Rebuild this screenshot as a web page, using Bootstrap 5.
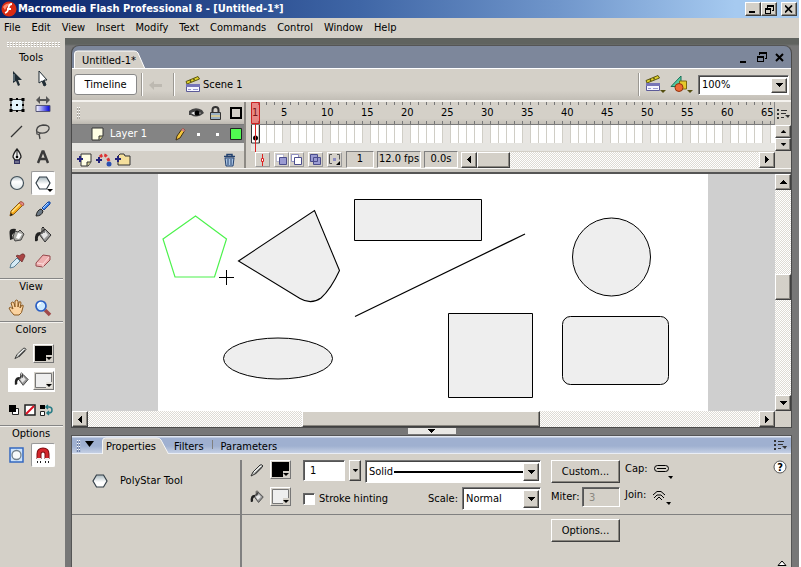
<!DOCTYPE html>
<html lang="en">
<head>
<meta charset="utf-8">
<meta name="viewport" content="width=device-width, initial-scale=1">
<title>Macromedia Flash Professional 8 - [Untitled-1*]</title>
<link href="https://cdn.jsdelivr.net/npm/bootstrap@5.3.0/dist/css/bootstrap.min.css" rel="stylesheet">
<style>
:root{--face:#d4d0c8;--lo:#808080;--dk:#404040;--frame:#777}
body{font:11px/14px "DejaVu Sans Condensed","Noto Sans",sans-serif;color:#000;background:#fff;overflow:hidden}
svg{display:block;flex:none}
button{font:inherit;color:inherit;padding:0;border:0;background:none}
a{color:inherit;text-decoration:none}
.app{min-height:100vh;margin-right:2px;background:var(--face)}
.titlebar{height:18px;background:linear-gradient(90deg,#0a246a,#1c3b80 18%,#3f66a6 45%,#7096cb 70%,#a6caf0 92%);color:#fff;font-size:11px;font-weight:700;padding:0 2px 0 1px}
.menubar{height:20px;padding:0 4px;gap:11px}
.raised{background:var(--face);border:1px solid;border-color:#fff var(--dk) var(--dk) #fff;box-shadow:inset -1px -1px 0 #8a8780;display:flex;align-items:center;justify-content:center;flex:none}
.sunk{border:1px solid;border-color:var(--lo) #fff #fff var(--lo)}
.winbtn{width:16px;height:14px}
.tools{width:65px}
.grip-h{height:5px;margin:4px 5px 0 6px;background:conic-gradient(#fff 25%,#a9a69f 0 50%,var(--face) 0) 0 0/3px 2px}
.grip-v{width:5px;height:12px;background:conic-gradient(#fff 25%,#a9a69f 0 50%,var(--face) 0) 0 0/2px 3px}
.tool-title{height:15px;padding-right:3px;text-align:center}
.tool-grid{display:grid;grid-template-columns:26px 26px;padding-left:4px}
.tool{height:26px;display:flex;align-items:center;justify-content:center}
.tool.on{background:#fff;border:1px solid;border-color:#999 #fff #fff #999;border-radius:2px;height:24px;width:24px;margin:1px}
.tool-sep{height:2px;background:linear-gradient(#858585 50%,#f4f2ee 50%);margin-right:2px}
.swatch-row{height:24px;margin:3px 10px 3px 8px;padding-left:4px;gap:4px}
.swatch{width:21px;height:19px;border:1px solid;border-color:#fff #777 #777 #fff;padding:1px;background:var(--face);display:flex}
.color-acts{height:30px;gap:4px;padding-right:4px}
.work{min-width:0;background:linear-gradient(#60635f 0 6px,var(--frame) 8px);padding:7px 7px 0 6px}
.doc{border:1px solid #4a4a4a;border-top-color:#555;border-radius:8px 8px 0 0;background:#7d879b;overflow:hidden}
.doc-head{height:22px;padding:0 6px 0 2px}
.tabbox{display:grid}
.tabbox>*{grid-area:1/1}
.editbar{height:32px;background:linear-gradient(var(--face) 70%,#c2beb6);border-top:1px solid #fff;padding:0 2px}
.timeline-btn{width:63px;height:21px;background:#fff;border:1px solid #888;border-radius:3px}
.vsep{width:2px;height:23px;background:linear-gradient(90deg,#9b9892 50%,#fff 50%)}
.combo{background:#fff;border:1px solid;border-color:#777 #fff #fff #777;box-shadow:inset 1px 1px 0 #444;display:flex;padding:2px 1px 1px 2px}
.combo select{appearance:none;border:0;background:none;font:inherit;color:#000;flex:1;min-width:0;padding:0 1px}
.combo .raised{width:16px}
.tl{background:var(--face);border-top:2px solid #f4f2ee}
.tl-left{width:174px;flex:none;border-right:2px solid #8d8a84}
.tl-head{height:23px;background:linear-gradient(var(--face) 75%,#bdb9b1);border-bottom:1px solid #7b7b7b}
.layer{height:18px;background:#848484;color:#fff}
.col-end{margin-right:2px}
.pad-strip{height:8px;background:#e6e5e1}
.tl-foot{height:17px}
.tl-mid{border-left:5px solid var(--face);min-width:0;position:relative}
.ruler{--t:repeating-linear-gradient(90deg,transparent 0 7px,#777 7px 8px);background:var(--t) 0 0/100% 3px no-repeat,var(--t) 0 100%/100% 3px no-repeat,linear-gradient(var(--face) 75%,#c4c0b8);overflow:hidden;white-space:nowrap;border-right:1px solid #888}
.ruler span{width:40px;flex:none}
.ruler .first{width:30px;padding-left:1px}
.frames{height:18px;background:repeating-linear-gradient(90deg,transparent 0 7px,#d0cec6 7px 8px),repeating-linear-gradient(90deg,#fff 0 32px,#e8e6e2 32px 40px)}
.playhead{position:absolute;left:0;top:0}
.minib{width:15px;height:15px;border:1px solid;border-color:#fff #999 #999 #fff;display:flex;align-items:center;justify-content:center;flex:none}
.readouts{gap:3px;margin-right:3px}
.readout{height:17px;text-align:center;flex:none;white-space:nowrap}
.track{background:repeating-conic-gradient(#fff 0 25%,#dedbd4 0 50%) 0 0/2px 2px}
.sb{width:16px;height:16px}
.tl-end{width:16px;flex:none}
.tl-base{height:6px;background:linear-gradient(#f8f7f4 0 1px,#c6c3bc 1px 4px,#555 4px)}
.stage-row{height:237px}
.pasteboard{background:#cfcfcf;padding-left:86px;min-width:0;overflow:hidden}
.stage{background:#fff;width:550px;flex:none}
.vscroll{width:16px;flex:none}
.gap-bar{height:7px}
.gap-bar button{width:48px;height:6px;background:#e9e8e5;margin:0 auto}
.props{background:var(--face);border:1px solid #555;border-bottom:0}
.props-head{height:18px;background:linear-gradient(#e0e6f0 0 1px,#9fb0d0 2px 10px,#c5d0e4);border-bottom:1px solid #e9edf5}
.props-head .grip-v{background:conic-gradient(#fff 25%,#6f80a6 0 50%,#a9b8d4 0) 0 0/2px 3px}
.props-left{width:168px;flex:none}
.tool-badge{margin:0 12px 0 20px}
.props-row{border-bottom:1px solid #808080;padding-top:2px}
.vrule{width:2px;background:#808080;flex:none}
.p-btn{height:23px}
.txt{font:inherit;color:#000;border:1px solid;border-color:#666 #fff #fff #666;box-shadow:inset 1px 1px 0 #555;background:#fff;padding:0 0 0 6px;border-radius:0}
.txt:disabled{background:var(--face);color:#8a8780}
.chk{appearance:none;width:12px;height:12px;margin:0;background:#fff;border:1px solid;border-color:#666 #fff #fff #666;box-shadow:inset 1px 1px 0 #555}
.paint-col{padding-right:8px}
.paint-col>div{gap:6px}
.strokes{width:252px;padding:0 10px 0 4px}
.mid-col{width:69px}
.cap-col{padding:6px 0 0 5px}
.cap-col>div{height:26px;gap:6px}
</style>
<script src="https://cdn.jsdelivr.net/npm/bootstrap@5.3.0/dist/js/bootstrap.bundle.min.js"></script>
</head>
<body>
<svg width="0" height="0" class="position-absolute" aria-hidden="true">
<defs>
<linearGradient id="gBlue"><stop offset="0" stop-color="#fff"/><stop offset="1" stop-color="#0000d8"/></linearGradient>
<linearGradient id="gBall" x2="0" y2="1"><stop offset="0" stop-color="#b5c3c9"/><stop offset=".4" stop-color="#fff"/><stop offset="1" stop-color="#dfe8ea"/></linearGradient>
<linearGradient id="gHex" x2="0" y2="1"><stop offset="0" stop-color="#a9b8be"/><stop offset=".6" stop-color="#fff"/></linearGradient>
<symbol id="up" viewBox="0 0 7 4"><path d="M3 0h1v1h1v1h1v1h1v1H0V3h1V2h1V1h1z"/></symbol>
<symbol id="down" viewBox="0 0 7 4"><path d="M0 0h7v1H6v1H5v1H4v1H3V3H2V2H1V1H0z"/></symbol>
<symbol id="left" viewBox="0 0 4 7"><path d="M4 0v7H3V6H2V5H1V4H0V3h1V2h1V1h1V0z"/></symbol>
<symbol id="right" viewBox="0 0 4 7"><path d="M0 0h1v1h1v1h1v1h1v1H3v1H2v1H1v1H0z"/></symbol>
<symbol id="pan" viewBox="0 0 13 10"><path d="M0 0h2v2H0zM0 4h2v2H0zM0 8h2v2H0zM4 1h6v1H4zM4 4h5v1H4zM4 8h3v1H4z" fill="#333"/><path d="M8 6h5l-2 3z" fill="#333"/></symbol>
<symbol id="clap" viewBox="0 0 17 17"><path d="M1 5.500 13 .500l1.500 2.500L2 8z" fill="#e0d22c" stroke="#5d5610"/><path d="M5 4l1 2M8.500 2.500l1 2" stroke="#5d5610" stroke-width="1.500"/><path d="M1.500 8.500h13v7h-13z" fill="#f6f6ff" stroke="#5b5a98"/><path d="M1 8h14v3H1z" fill="#7775b8"/><path d="M3 13.500h3M8 13.500h5" stroke="#9a99d0"/></symbol>
<symbol id="pencil" viewBox="0 0 18 18"><path d="M2 16l1-5L12 2q2-1 4 2L6 14z" fill="#f5a91c" stroke="#8a5a10"/><path d="M4 12l8-8" stroke="#ffe486" stroke-width="1.500"/><path d="M11 3l1-1q3-1 4 2l-1 2z" fill="#e38a86" stroke="#9d4742" stroke-width=".7"/><path d="M2 16l1-3 2 2z" fill="#222"/></symbol>
<symbol id="bucket" viewBox="0 0 18 18"><path d="M5 8l6-5 6 6-6 7z" fill="#999" stroke="#333"/><path d="M7 8l4-3 3 4-4 4z" fill="#e6e6e6"/><path d="M8 8V2q1-2 2 0v5" fill="none" stroke="#222"/><path d="M6 6q-6 0-5 9 2 1 3-1-1-4 3-6z" fill="#222"/></symbol>
<symbol id="hexa" viewBox="0 0 16 14"><path d="M4.500 1h7L15 7l-3.500 6h-7L1 7z" fill="url(#gHex)" stroke="#333f48" stroke-width="1.200"/></symbol>
<symbol id="pen2" viewBox="0 0 14 14"><path d="M1 13l2-4 7-7q2-1 3 1L5 11z" fill="#c9cdc9" stroke="#333"/><path d="M4 9l7-6" stroke="#fff"/><path d="M5 11l7-7" stroke="#444" stroke-width="1.500"/></symbol>
</defs></svg>

<div class="app d-flex flex-column">
<header class="titlebar d-flex align-items-center">
 <svg width="17" height="16" viewBox="0 0 17 16"><circle cx="8" cy="8" r="7.500" fill="#d92b12"/><path d="M2 6q3-5 9-3-5 1-7 6z" fill="#ff8e72"/><path d="M11 3q-3 0-3.500 4T4 12M6 8h4" fill="none" stroke="#fff" stroke-width="1.800"/></svg>
 <span class="flex-grow-1">Macromedia Flash Professional 8 - [Untitled-1*]</span>
 <button class="raised winbtn" aria-label="Minimize"><svg width="8" height="8"><path d="M0 6h6v2H0z"/></svg></button>
 <button class="raised winbtn" aria-label="Restore"><svg width="9" height="9"><path d="M2 0h7v6H7V5h1V2H3v1H2zM0 3h6v6H0zM1 5v3h4V5z" fill-rule="evenodd"/></svg></button>
 <button class="raised winbtn ms-1" aria-label="Close"><svg width="8" height="8"><path d="M0 .500l7 7M7 .500l-7 7" stroke="#000" stroke-width="1.700"/></svg></button>
</header>
<nav class="menubar d-flex align-items-center">
 <a href="#">File</a><a href="#">Edit</a><a href="#">View</a><a href="#">Insert</a><a href="#">Modify</a><a href="#">Text</a><a href="#">Commands</a><a href="#">Control</a><a href="#">Window</a><a href="#">Help</a>
</nav>

<div class="d-flex flex-grow-1">
<aside class="tools flex-shrink-0">
 <div class="grip-h"></div>
 <div class="tool-title mt-1">Tools</div>
 <div class="tool-grid">
  <button class="tool" aria-label="Selection"><svg width="18" height="18"><path d="M5 1v12l3-2 2 5 2-1-2-5h4z" fill="#1e2b33"/><path d="M6 4v7" stroke="#8ba0ab"/></svg></button>
  <button class="tool" aria-label="Subselection"><svg width="18" height="18"><path d="M5 1v12l3-2 2 5 2-1-2-5h3z" fill="#fff" stroke="#1e2b33"/><path d="M8 11l2 5 2-1-2-5z" fill="#1e2b33"/></svg></button>
  <button class="tool" aria-label="Free transform"><svg width="18" height="18"><path d="M3 3.500h12v11H3z" fill="#e2f3fa" stroke="#333"/><path d="M1.500 2h3v3h-3zM13.500 2h3v3h-3zM1.500 13h3v3h-3zM13.500 13h3v3h-3zM8 2h2v2H8zM8 14h2v2H8zM2 8h2v2H2zM14 8h2v2h-2zM8 8h2v2H8z"/></svg></button>
  <button class="tool" aria-label="Gradient transform"><svg width="18" height="18"><path d="M4 4h10" stroke="#555" stroke-width="2"/><path d="M6 0v8L2 4zM12 0v8l4-4z" fill="#555"/><path d="M2 9.500h14v6H2z" fill="url(#gBlue)" stroke="#557"/></svg></button>
  <button class="tool" aria-label="Line"><svg width="18" height="18"><path d="M3 15L14 4" stroke="#333" stroke-width="1.200"/></svg></button>
  <button class="tool" aria-label="Lasso"><svg width="18" height="18"><path d="M3 11Q1 4 9 3q7 0 6 4-2 5-9 4-4-2-3 1 3 1 3-1M5 12l1 5" fill="none" stroke="#444" stroke-width="1.300"/></svg></button>
  <button class="tool" aria-label="Pen"><svg width="18" height="18"><path d="M9 1Q5 6 5 9l2 3h4l2-3q0-3-4-8z" fill="#eee" stroke="#222" stroke-width="1.300"/><path d="M9 2v7" stroke="#222"/><circle cx="9" cy="9" r="1.300"/><path d="M6 12h6v4H6z" fill="#343460"/><path d="M7 14h4" stroke="#aab"/></svg></button>
  <button class="tool" aria-label="Text"><svg width="18" height="18"><path d="M4 15L8.500 3.500h1L14 15M6 11h6" fill="none" stroke="#3a3a3a" stroke-width="2.400"/></svg></button>
  <button class="tool" aria-label="Oval"><svg width="18" height="18"><circle cx="9" cy="9" r="6.500" fill="url(#gBall)" stroke="#43515a" stroke-width="1.200"/></svg></button>
  <button class="tool on" aria-label="PolyStar"><svg width="20" height="20"><use href="#hexa" x="2" y="3" width="16" height="14"/><path d="M14 16h6l-3 3z"/></svg></button>
  <button class="tool" aria-label="Pencil"><svg width="18" height="18"><use href="#pencil"/></svg></button>
  <button class="tool" aria-label="Brush"><svg width="18" height="18"><path d="M8 8l6-6q3-1 2 2l-6 6z" fill="#3f86ec" stroke="#14429a"/><path d="M9 8l5-5" stroke="#b8dcff"/><path d="M2 16q1-6 5-7l2 2q-1 5-7 5z" fill="#6b7884" stroke="#222"/></svg></button>
  <button class="tool" aria-label="Ink bottle"><svg width="18" height="18"><path d="M7 5l3 1 2-2 4 4-3 6-6 1-2-4z" fill="#a9a9a4" stroke="#444"/><path d="M10 7l4 1-3 5-3-1z" fill="#fff"/><path d="M8 3q-7-1-6.500 4l.5 7 3-1-1-4 3-3z" fill="#222"/></svg></button>
  <button class="tool" aria-label="Paint bucket"><svg width="18" height="18"><use href="#bucket"/></svg></button>
  <button class="tool" aria-label="Eyedropper"><svg width="18" height="18"><path d="M2 16l1-4 6-6 3 3-6 6z" fill="#d5eaf5" stroke="#5a7f95"/><path d="M8 4l6 6 1-2 2-4q-1-3-3-2l-3 2-1-1z" fill="#a94444" stroke="#662525" stroke-width=".7"/></svg></button>
  <button class="tool" aria-label="Eraser"><svg width="18" height="18"><path d="M2 11L9 3l7 1v4l-7 7-7-1z" fill="#eeb0b0" stroke="#96484c"/><path d="M3 11l6 1 6-7M9 12v3" fill="none" stroke="#fbdcdc"/></svg></button>
 </div>
 <div class="tool-sep mt-1"></div>
 <div class="tool-title">View</div>
 <div class="tool-grid">
  <button class="tool" aria-label="Hand"><svg width="18" height="18"><path d="M6 16Q2 12 1 9q1-2 4 1L3 4q2-2 3 0l1 4V2q2-2 3 0v6l1-5q2-1 2 1l-1 5 2-3q2 0 1 2-1 7-4 8z" fill="#fbd3a0" stroke="#8a5a22"/></svg></button>
  <button class="tool" aria-label="Zoom"><svg width="18" height="18"><path d="M11 11l5 5" stroke="#a04a4a" stroke-width="3.500"/><circle cx="7" cy="7" r="5" fill="#cdeaff" stroke="#2a5fc4" stroke-width="1.700"/><path d="M4 7q0-3 3-3" stroke="#fff" fill="none" stroke-width="1.500"/></svg></button>
 </div>
 <div class="tool-sep"></div>
 <div class="tool-title">Colors</div>
 <div class="swatch-row d-flex align-items-center"><svg width="17" height="16"><use href="#pen2" x="2" y="1" width="13" height="14"/></svg>
  <button class="swatch" aria-label="Stroke color"><svg width="17" height="15"><path d="M0 0h17v15H0z" fill="#000"/><path d="M11 9h6v6h-6z" fill="#d4d0c8"/><path d="M11 11h6l-3 3z"/></svg></button></div>
 <div class="swatch-row d-flex align-items-center bg-white"><svg width="17" height="16"><use href="#bucket" x="2" y="0" width="15" height="15"/></svg>
  <button class="swatch" aria-label="Fill color"><svg width="17" height="15"><path d="M.500 .500h16v14H.500z" fill="#eee" stroke="#777"/><path d="M11 9h6v6h-6z" fill="#e4e2dc"/><path d="M11 11h6l-3 3z"/></svg></button></div>
 <div class="color-acts d-flex align-items-center justify-content-center">
  <button aria-label="Black and white"><svg width="12" height="12"><path d="M4.500 4.500h6v6h-6z" fill="#fff" stroke="#222"/><path d="M1 1h7v7H1z"/></svg></button>
  <button aria-label="No color"><svg width="12" height="12"><path d="M1 1h10v10H1z" fill="#fff" stroke="#222" stroke-width="1.500"/><path d="M2 10l8-8" stroke="#d12" stroke-width="2"/></svg></button>
  <button aria-label="Swap colors"><svg width="13" height="12"><path d="M0 1h5v4H0z"/><path d="M.500 7.500h4v4h-4z" fill="#fff" stroke="#222"/><path d="M6 3h3q3 0 3 3t-3 3H7M8 1L6 3l2 2M9 7L7 9l2 2" fill="none" stroke="#287c86" stroke-width="1.500"/></svg></button>
 </div>
 <div class="tool-sep"></div>
 <div class="tool-title">Options</div>
 <div class="tool-grid">
  <button class="tool" aria-label="Object drawing"><svg width="16" height="16"><path d="M1 1h13v14H1z" fill="#cfe4fb" stroke="#3568c0" stroke-width="1.500"/><circle cx="7.500" cy="8" r="4.500" fill="#f6fafa" stroke="#71808a" stroke-width="1.300"/></svg></button>
  <button class="tool on" aria-label="Snap to objects"><svg width="18" height="18"><path d="M5 13V8q0-4 4-4t4 4v5" fill="none" stroke="#7a0f12" stroke-width="5"/><path d="M5 12V8q0-4 4-4t4 4v4" fill="none" stroke="#d3252b" stroke-width="3"/><path d="M3 12h4v2H3zM11 12h4v2h-4z" fill="#eee"/><path d="M3.500 15v2M6.500 15v2M11.500 15v2M14.500 15v2" stroke="#222"/></svg></button>
 </div>
</aside>

<main class="work d-flex flex-column flex-grow-1">
<section class="doc">
 <div class="doc-head d-flex align-items-end justify-content-between">
  <div class="tabbox"><svg width="72" height="18"><path d="M.500 19V4q0-3 3-3H60q3 0 4 2l7 16z" fill="#d4d0c8" stroke="#fff"/></svg><span class="px-2 pt-1">Untitled-1*</span></div>
  <div class="d-flex align-items-center gap-2 pb-1">
   <button aria-label="Minimize document"><svg width="12" height="12"><path d="M4 9h6v2H4z"/></svg></button>
   <button aria-label="Restore document"><svg width="11" height="12"><path d="M3 0h8v7H9V6h1V2H4v1H3zM1 4h7v6H1zM2 6v3h5V6z" fill-rule="evenodd"/></svg></button>
   <button aria-label="Close document"><svg width="10" height="12"><path d="M1 2l7 7M8 2l-7 7" stroke="#000" stroke-width="2"/></svg></button>
  </div>
 </div>
 <div class="editbar d-flex align-items-center">
  <button class="timeline-btn">Timeline</button>
  <div class="vsep ms-1"></div>
  <svg width="26" height="16"><path d="M6 8l5-4v3h8v3h-8v3z" fill="#bdb9b1"/></svg>
  <div class="vsep ms-1"></div>
  <svg class="ms-2" width="20" height="18"><use href="#clap" x="2" y="0" width="17" height="17"/></svg>
  <a href="#" class="flex-grow-1">Scene 1</a>
  <div class="vsep"></div>
  <button class="ms-1" aria-label="Edit scene"><svg width="22" height="19"><use href="#clap" x="1" y="0" width="17" height="17"/><path d="M16 15h6l-3 3z" fill="#554f10"/></svg></button>
  <button class="ms-1 me-1" aria-label="Edit symbols"><svg width="24" height="19"><path d="M1 11.500L11 1v10.500z" fill="#52c9a0" stroke="#187058"/><path d="M9.500 6h7v8h-7z" fill="#e6c92c" stroke="#7c6a12"/><circle cx="9" cy="12.500" r="4" fill="#ee6a35" stroke="#93330f"/><path d="M17 15h6l-3 3z" fill="#554f10"/></svg></button>
  <div class="combo" style="width:91px;height:20px"><select aria-label="Zoom"><option>100%</option></select><span class="raised"><svg width="7" height="4"><use href="#down"/></svg></span></div>
 </div>

 <div class="tl d-flex">
  <div class="tl-left">
   <div class="tl-head d-flex align-items-center ps-1">
    <div class="grip-v me-auto"></div>
    <svg width="17" height="14"><path d="M1 5q6-5 13-1l2 3q-7 6-13 2l-2 0z" fill="#444"/><path d="M3 7q5-3 10 0-5 4-10 0z" fill="#eee"/><circle cx="9" cy="7" r="2.500"/></svg>
    <svg class="ms-1" width="13" height="14"><path d="M3.500 7V4q0-3 3-3t3 3v3" fill="none" stroke="#333" stroke-width="2"/><path d="M1.500 6.500h10v7h-10z" fill="#dfe9e4" stroke="#333"/><path d="M2 8h9M2 12h9" stroke="#557ba5"/><path d="M2 10h9" stroke="#c9a94a"/></svg>
    <svg class="ms-2 col-end" width="12" height="12"><path d="M1 1h10v10H1z" fill="none" stroke="#000" stroke-width="2"/></svg>
   </div>
   <div class="layer d-flex align-items-center">
    <svg class="ms-3 me-1" width="18" height="14"><path d="M4 1h11v8l-3 4H4z" fill="#fffee4" stroke="#333"/><path d="M11 13V9h4" fill="#ccc98c" stroke="#333"/></svg>
    <span class="flex-grow-1">Layer 1</span>
    <svg width="12" height="14"><path d="M2 13l1-4 5-7q2-1 3 1L6 11z" fill="#f4c63c" stroke="#443010"/><path d="M7 3l2-2 2 2-1 2z" fill="#cf8080"/></svg>
    <svg class="ms-2" width="36" height="14"><path d="M3 6h3v3H3zM22 6h3v3h-3z" fill="#fff"/></svg>
    <svg class="col-end" width="12" height="12"><path d="M.500 .500h11v11H.500z" fill="#51fa51" stroke="#222"/></svg>
   </div>
   <div class="pad-strip"></div>
   <div class="tl-foot d-flex align-items-center ps-1">
    <button aria-label="Insert layer"><svg width="19" height="15"><path d="M5 2h10v8l-3 4H5z" fill="#fffee4" stroke="#333"/><path d="M11 14v-4h4" fill="#ccc98c" stroke="#333"/><path d="M1 7h6M4 4v6" stroke="#24247a" stroke-width="2"/></svg></button>
    <button aria-label="Add motion guide"><svg width="19" height="15"><path d="M5 5q5-6 9 4" fill="none" stroke="#d33" stroke-width="3" stroke-dasharray="3 2"/><path d="M1 8h6M4 5v6" stroke="#24247a" stroke-width="2"/><circle cx="14" cy="12" r="2.500" fill="#2a4fb0"/></svg></button>
    <button class="me-auto" aria-label="Insert layer folder"><svg width="18" height="15"><path d="M4 4l2-2h4l1 2h5v9H4z" fill="#f4df9c" stroke="#333"/><path d="M1 7h6M4 4v6" stroke="#24247a" stroke-width="2"/></svg></button>
    <button class="me-2" aria-label="Delete layer"><svg width="13" height="14"><path d="M1 3.500h11M4 3V1.500h5V3" fill="none" stroke="#23416e" stroke-width="1.500"/><path d="M2 5h9l-1 8H3z" fill="#a9c3e2" stroke="#23416e"/><path d="M5 6v6M8 6v6" stroke="#23416e"/></svg></button>
   </div>
  </div>
  <div class="tl-mid flex-grow-1">
   <div class="ruler tl-head d-flex align-items-center"><span class="first">1</span><span>5</span><span>10</span><span>15</span><span>20</span><span>25</span><span>30</span><span>35</span><span>40</span><span>45</span><span>50</span><span>55</span><span>60</span><span>65</span></div>
   <div class="frames"></div>
   <div class="pad-strip"></div>
   <svg class="playhead" width="10" height="50"><path d="M.500 .500h8v21h-8z" fill="#f33" fill-opacity=".45" stroke="#c22"/><path d="M.500 23v18h8V23" fill="none" stroke="#333"/><circle cx="4.500" cy="36" r="2.500"/><path d="M4.500 22v28" stroke="#d22"/></svg>
   <div class="tl-foot d-flex align-items-center">
    <button class="minib ms-1" aria-label="Center frame"><svg width="7" height="12"><path d="M3.500 0v12" stroke="#d22"/><path d="M2.500 4.500h2v3h-2z" fill="#fff" stroke="#d22"/></svg></button>
    <button class="minib ms-1" aria-label="Onion skin"><svg width="13" height="13"><path d="M1.500 1.500h7v7h-7z" fill="#fff" stroke="#8f90bf" stroke-dasharray="1 1"/><path d="M4.500 4.500h7v7h-7z" fill="#9a9bd2" stroke="#4b4d8c"/></svg></button>
    <button class="minib" aria-label="Onion skin outlines"><svg width="13" height="13"><path d="M1.500 1.500h7v7h-7z" fill="#fff" stroke="#8f90bf"/><path d="M4.500 4.500h7v7h-7z" fill="#fff" stroke="#4b4d8c"/></svg></button>
    <button class="minib ms-1" aria-label="Edit multiple frames"><svg width="13" height="13"><path d="M1.500 1.500h7v7h-7zM4.500 4.500h7v7h-7z" fill="#9a9bd2" stroke="#4b4d8c"/></svg></button>
    <button class="minib mx-1" aria-label="Modify onion markers"><svg width="13" height="13"><path d="M4 1.500H1.500v9H4M9 1.500h2.500v5" fill="none" stroke="#555"/><path d="M5 5h3v3H5z" fill="#8b8cc4"/><path d="M12 8v4H8z"/></svg></button>
    <div class="readouts d-flex">
     <span class="sunk readout" style="width:28px">1</span>
     <span class="sunk readout" style="width:44px">12.0 fps</span>
     <span class="sunk readout" style="width:34px">0.0s</span>
    </div>
    <div class="track d-flex flex-grow-1"><button class="raised sb" aria-label="Scroll left"><svg width="4" height="7"><use href="#left"/></svg></button><span class="raised sb" style="width:33px"></span><button class="raised sb ms-auto" aria-label="Scroll right"><svg width="4" height="7"><use href="#right"/></svg></button></div>
   </div>
  </div>
  <div class="tl-end">
   <button class="d-flex align-items-center justify-content-center w-100" style="height:23px" aria-label="Frame view"><svg width="13" height="10"><use href="#pan"/></svg></button>
   <button class="raised w-100" style="height:13px" aria-label="Scroll layers up"><svg width="5" height="3"><use href="#up"/></svg></button>
   <button class="raised w-100" style="height:13px" aria-label="Scroll layers down"><svg width="5" height="3"><use href="#down"/></svg></button>
  </div>
 </div>
 <div class="tl-base"></div>

 <div class="stage-row d-flex">
  <div class="pasteboard d-flex flex-grow-1"><div class="stage">
   <svg width="550" height="237" viewBox="158 174 550 237" fill="#eee" stroke="#000">
    <path d="M195.500 216l31 23-12 38h-39.500l-12-38z" fill="#fff" stroke="#4df24d" stroke-width="1.200"/>
    <path d="M219 277.500h15M226.500 270v15"/>
    <path d="M238.500 261L314.500 210.500l25 60Q331 289 321 298 311 305 300 298.500z" stroke-width="1.100"/>
    <path d="M354.500 199.500h127v41h-127z"/>
    <path d="M355 316.500L525 234" stroke-width="1.200"/>
    <circle cx="611.500" cy="257" r="39"/>
    <ellipse cx="278" cy="358.500" rx="54.500" ry="20.500"/>
    <path d="M448.500 313.500h84v84h-84z"/>
    <rect x="562.500" y="316.500" width="106" height="68" rx="8"/>
   </svg></div></div>
  <div class="vscroll track d-flex flex-column"><button class="raised sb" aria-label="Scroll up"><svg width="7" height="4"><use href="#up"/></svg></button><span style="flex:84"></span><span class="raised" style="height:26px"></span><span style="flex:95"></span><button class="raised sb" aria-label="Scroll down"><svg width="7" height="4"><use href="#down"/></svg></button></div>
 </div>
 <div class="d-flex" style="background:#d4d0c8">
  <div class="track d-flex flex-grow-1"><button class="raised sb" aria-label="Scroll left"><svg width="4" height="7"><use href="#left"/></svg></button><span style="flex:214"></span><span class="raised sb" style="width:238px"></span><span style="flex:219"></span><button class="raised sb" aria-label="Scroll right"><svg width="4" height="7"><use href="#right"/></svg></button></div>
  <div class="vscroll"></div>
 </div>
</section>
<div class="gap-bar d-flex"><button class="d-flex align-items-center justify-content-center" aria-label="Collapse panel"><svg width="7" height="4"><use href="#down"/></svg></button></div>

<section class="props flex-grow-1 d-flex flex-column">
 <div class="props-head d-flex">
  <div class="grip-v ms-1 mt-1"></div>
  <svg class="ms-1 me-2 mt-1" width="9" height="10"><path d="M0 1h9L4.500 7z"/></svg>
  <div class="tabbox"><svg width="68" height="18"><path d="M.500 19V5q0-3 3-3H55q3 0 4 2l8 15z" fill="#d4d0c8" stroke="#f6f6f4"/></svg><a href="#" class="ps-1 pt-1">Properties</a></div>
  <a href="#" class="ms-1 pt-1 pe-2">Filters</a><span class="vrule mt-1 mb-1" style="width:1px"></span><a href="#" class="ps-2 pt-1">Parameters</a>
  <button class="ms-auto me-1" aria-label="Panel options"><svg width="13" height="10"><use href="#pan"/></svg></button>
 </div>
 <div class="flex-grow-1 d-flex flex-column">
  <div class="props-row d-flex">
   <div class="props-left d-flex align-items-center pb-2"><svg class="tool-badge" width="16" height="14"><use href="#hexa"/></svg><span>PolyStar Tool</span></div>
   <div class="vrule mt-1"></div>
   <div class="paint-col d-flex flex-column gap-1 pt-1 ps-2">
    <div class="d-flex align-items-center"><svg width="14" height="14"><use href="#pen2"/></svg><button class="swatch" aria-label="Stroke color"><svg width="17" height="15"><path d="M0 0h17v15H0z"/><path d="M11 9h6v6h-6z" fill="#d4d0c8"/><path d="M11 11h6l-3 3z"/></svg></button></div>
    <div class="d-flex align-items-center pt-1"><svg width="14" height="14"><use href="#bucket"/></svg><button class="swatch" aria-label="Fill color"><svg width="17" height="15"><path d="M.500 .500h16v14H.500z" fill="#eee" stroke="#777"/><path d="M11 9h6v6h-6z" fill="#d4d0c8"/><path d="M11 11h6l-3 3z"/></svg></button></div>
   </div>
   <div class="strokes flex-shrink-0">
    <div class="d-flex pt-1"><input class="txt" style="width:42px;height:21px" value="1" aria-label="Stroke height"><button class="raised mx-1" style="width:12px;height:21px" aria-label="Height slider"><svg width="5" height="3"><use href="#down"/></svg></button>
     <div class="combo align-items-center flex-grow-1" style="height:23px"><select class="flex-grow-0 flex-shrink-0" style="flex-basis:26px" aria-label="Stroke style"><option>Solid</option></select><span class="flex-grow-1 bg-black" style="height:2px"></span><span class="raised align-self-stretch"><svg width="7" height="4"><use href="#down"/></svg></span></div></div>
    <div class="d-flex align-items-center pt-1"><input type="checkbox" class="chk me-1" id="hint"><label for="hint" class="flex-grow-1">Stroke hinting</label><label for="scale" class="me-1">Scale:</label><div class="combo" style="width:79px;height:23px"><select id="scale"><option>Normal</option></select><span class="raised"><svg width="7" height="4"><use href="#down"/></svg></span></div></div>
   </div>
   <div class="mid-col pt-1 flex-shrink-0">
    <button class="raised p-btn w-100">Custom...</button>
    <div class="d-flex align-items-center pt-1"><label for="miter" class="flex-grow-1">Miter:</label><input id="miter" class="txt" style="width:38px;height:20px" value="3" disabled></div>
   </div>
   <div class="cap-col">
    <div class="d-flex"><span>Cap:</span><button class="align-self-start" aria-label="Cap"><svg width="20" height="18"><rect x=".500" y="3.500" width="14" height="6" rx="3" fill="none" stroke="#000"/><path d="M3 6.500h9" stroke="#000"/><path d="M14 14h5l-2 3z"/></svg></button></div>
    <div class="d-flex"><span>Join:</span><button class="align-self-start" aria-label="Join"><svg width="20" height="18"><path d="M1 7L5 3.500h4L13 7M2 10l3-3h4l3 3M4 12l3-3 3 3" fill="none" stroke="#000"/><path d="M14 14h5l-2 3z"/></svg></button></div>
   </div>
   <button class="ms-auto me-1 align-self-start pt-1" aria-label="Help"><svg width="14" height="14"><circle cx="7" cy="7" r="6" fill="#fff" stroke="#555"/><text x="7" y="11" text-anchor="middle" font-size="11" font-weight="700">?</text></svg></button>
  </div>
  <div class="d-flex flex-grow-1">
   <div class="props-left"></div><div class="vrule"></div>
   <div style="flex:0 0 309px"></div>
   <div class="pt-1"><button class="raised p-btn" style="width:69px">Options...</button></div>
   <button class="ms-auto mt-auto me-1" aria-label="Collapse properties"><svg width="10" height="7"><path d="M1 5.500L5 1l4 4.500z" fill="#fff" stroke="#000"/></svg></button>
  </div>
 </div>
</section>
</main>
</div>
</div>
</body>
</html>
